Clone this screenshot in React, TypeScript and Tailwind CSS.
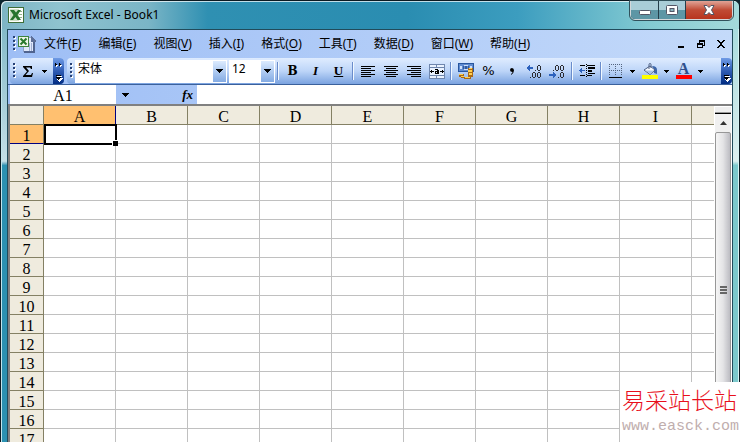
import type { ReactNode } from 'react';
import clsx from 'clsx';

const menus = [
  ['文件', 'F'],
  ['编辑', 'E'],
  ['视图', 'V'],
  ['插入', 'I'],
  ['格式', 'O'],
  ['工具', 'T'],
  ['数据', 'D'],
  ['窗口', 'W'],
  ['帮助', 'H'],
];

const columns = ['A', 'B', 'C', 'D', 'E', 'F', 'G', 'H', 'I'];
const rows = Array.from({ length: 17 }, (_, i) => i + 1);

function ExcelLogo({ className }: { className?: string }) {
  return (
    <svg viewBox="0 0 16 16" className={className} shapeRendering="crispEdges">
      <rect width="16" height="16" fill="#3f6e38" />
      <rect x="1" y="1" width="14" height="14" fill="#fdfefb" />
      <rect x="2" y="2" width="12" height="12" fill="#cfe0c8" />
      <rect x="11" y="2" width="3" height="12" fill="#fff" />
      <path d="M11 4.500h3M11 7.500h3M11 10.500h3" stroke="#8fb388" />
      <path
        d="M2 3h4l2 2.500L10 3h3L9.500 8l3.500 5H9.500L7.500 10 5 13H2l3.500-5z"
        fill="#27732c"
        shapeRendering="auto"
      />
    </svg>
  );
}

function Grip() {
  return (
    <svg viewBox="0 0 3 16" className="w-[3px] h-4 shrink-0" shapeRendering="crispEdges">
      {[0, 4, 8, 12].map((y) => (
        <g key={y}>
          <rect x="1" y={y + 1} width="2" height="2" fill="#fff" />
          <rect x="0" y={y} width="2" height="2" fill="#274176" />
        </g>
      ))}
    </svg>
  );
}

function Arrow() {
  return (
    <svg viewBox="0 0 5 3" className="w-[5px] h-[3px]" shapeRendering="crispEdges">
      <path d="M0 0h5v1H4v1H3v1H2V2H1V1H0z" fill="#000" />
    </svg>
  );
}

function WideArrow() {
  return (
    <svg viewBox="0 0 7 4" className="h-1 w-[7px]" shapeRendering="crispEdges">
      <path d="M0 0h7v1H6v1H5v1H4v1H3V3H2V2H1V1H0z" />
    </svg>
  );
}

function Separator() {
  return (
    <span className="flex w-1.5 shrink-0 justify-center">
      <span className="h-[18px] w-px bg-[#6a8ccb]" />
      <span className="h-[18px] w-px bg-[#f1f9ff]" />
    </span>
  );
}

function ToolButton({ label, children }: { label: string; children: ReactNode }) {
  return (
    <button aria-label={label} className="flex h-[22px] w-[23px] shrink-0 items-center justify-center">
      {children}
    </button>
  );
}

function DropButton({ label }: { label: string }) {
  return (
    <button aria-label={label} className="flex h-[22px] w-[11px] shrink-0 items-center justify-center">
      <Arrow />
    </button>
  );
}

function Overflow({ label }: { label: string }) {
  return (
    <button
      aria-label={label}
      className="flex h-full w-[11px] shrink-0 justify-center rounded-r-sm bg-linear-to-b from-[#6f9be6] via-[#2f5cb4] to-[#022c83]"
    >
      <svg viewBox="0 0 9 27" className="h-[27px] w-[9px]" shapeRendering="crispEdges">
        <path d="M2 6h1v1h1v1H3v1H2zM6 6h1v1h1v1H7v1H6z" fill="#fff" />
        <path d="M1 5h1v1h1v1H2v1H1zM5 5h1v1h1v1H6v1H5z" fill="#000" />
        <path d="M3 20h6v1H8v1H7v1H6v1H5v-1H4v-1H3zM3 18h5v1H3z" fill="#fff" />
        <path d="M2 17h5v1H2zM2 19h5v1H6v1H5v1H4v-1H3v-1H2z" fill="#000" />
      </svg>
    </button>
  );
}

function Lines({ label, spans }: { label: string; spans: [number, number][] }) {
  return (
    <ToolButton label={label}>
      <svg viewBox="0 0 16 13" className="h-[13px] w-4" shapeRendering="crispEdges">
        {spans.map(([x, width], i) => (
          <rect key={i} x={x} y={i * 2 + 1} width={width} height="1" fill="#000" />
        ))}
      </svg>
    </ToolButton>
  );
}

function Combo({ label, value, className }: { label: string; value: string; className: string }) {
  return (
    <div className={clsx('relative h-[23px] shrink-0 bg-white', className)}>
      <select
        aria-label={label}
        defaultValue={value}
        className="block h-[18px] w-full appearance-none bg-transparent pl-[3px] font-['Noto_Sans','Noto_Sans_CJK_SC',sans-serif] text-xs outline-none"
      >
        <option>{value}</option>
      </select>
      <span className="pointer-events-none absolute inset-y-px right-px flex w-[13px] items-center justify-center bg-linear-to-b from-[#dcebfe] to-[#84abe3]">
        <WideArrow />
      </span>
    </div>
  );
}

function Decimals({ label, increase }: { label: string; increase?: boolean }) {
  const single = increase ? 1 : 8;
  const double = increase ? 8 : 1;
  return (
    <ToolButton label={label}>
      <svg viewBox="0 0 17 15" className="h-[15px] w-[17px]" shapeRendering="crispEdges">
        <g fill="#2b2b30">
          {[
            [11, single],
            [6, double],
            [11, double],
          ].map(([x, y]) => (
            <path
              key={`${x}-${y}`}
              transform={`translate(${x} ${y})`}
              d="M1 0h2v1H1zM0 1h1v4H0zM3 1h1v4H3zM1 5h2v1H1z"
            />
          ))}
          <rect x="9" y={single + 5} width="1" height="1" />
          <rect x="4" y={double + 5} width="1" height="1" />
        </g>
        {increase ? (
          <path d="M0 4h1V3h1V2h1V1h1v2h3v2H4v2H3V6H2V5H1z" fill="#2d62bd" />
        ) : (
          <path d="M0 10h4V8h1v1h1v1h1v2H6v1H5v1H4v-2H0z" fill="#2d62bd" />
        )}
      </svg>
    </ToolButton>
  );
}

function TitleBar() {
  return (
    <header className="flex h-7 items-start justify-between pl-[7px] pr-1.5">
      <div className="flex h-7 items-center">
        <ExcelLogo className="size-4" />
        <h1 className="ml-[5px] font-['Noto_Sans',sans-serif] text-xs text-black">Microsoft Excel - Book1</h1>
      </div>
      <div className="flex h-[19px] rounded-b-[5px] border border-t-0 border-white/80 bg-[#243e4a] outline outline-[#31515b]">
        <button
          aria-label="Minimize"
          className="flex w-[27px] items-center justify-center rounded-bl bg-linear-to-b from-[#a9cdd7] from-50% to-[#5d96a5] to-50%"
        >
          <svg viewBox="0 0 12 5" className="mt-1 h-[5px] w-3">
            <rect x=".5" y=".5" width="11" height="4" rx="1" fill="#fff" stroke="#535666" />
          </svg>
        </button>
        <button
          aria-label="Maximize"
          className="ml-px flex w-[26px] items-center justify-center bg-linear-to-b from-[#a9cdd7] from-50% to-[#5d96a5] to-50%"
        >
          <svg viewBox="0 0 12 10" className="h-2.5 w-3">
            <rect x=".5" y=".5" width="11" height="9" rx="1" fill="#fff" stroke="#535666" />
            <rect x="4" y="3.500" width="4" height="3" fill="#8cb9c3" stroke="#535666" />
          </svg>
        </button>
        <button
          aria-label="Close"
          className="ml-px flex w-[46px] items-center justify-center rounded-br bg-linear-to-b from-[#e0a397] via-[#c04b35] via-50% to-[#b8341d]"
        >
          <svg viewBox="0 0 12 10" className="h-2.5 w-3">
            <path d="M1 .5h3l2 2 2-2h3L8.500 5l2.500 4.500H8l-2-2-2 2H1L3.500 5z" fill="#fff" stroke="#535666" />
          </svg>
        </button>
      </div>
    </header>
  );
}

function MenuBar() {
  return (
    <div className="flex h-7 items-center justify-between pl-[5px] pr-[7px]">
      <div className="flex items-center">
        <Grip />
        <svg viewBox="0 0 18 18" className="ml-0.5 h-[18px] w-[18px]" shapeRendering="crispEdges">
          <path d="M5 2h8l4 4v11H5z" fill="#dfe8fa" />
          <path d="M5 12v4h11M5 2h8" fill="none" stroke="#8ea0c8" />
          <path d="M13 1h1v1h1v1h1v1h1v1h1v2h-5z" fill="#5d6f98" />
          <path d="M11.500 8v8M13.500 8v8" stroke="#a0afd3" />
          <path d="M16 7v10H6" fill="none" stroke="#50648f" strokeWidth="2" />
          <rect x="0" y="1" width="11" height="11" fill="#3f8440" />
          <rect x="1" y="2" width="9" height="9" fill="#eef6e9" />
          <path d="M2.500 3.500l6 6M8.500 3.500l-6 6" stroke="#2a7a2d" strokeWidth="2" shapeRendering="auto" />
        </svg>
        <nav className="ml-2 flex gap-[17px] font-['Noto_Sans','Noto_Sans_CJK_SC',sans-serif] text-xs">
          {menus.map(([name, key]) => (
            <button key={key} className="whitespace-nowrap">
              {name}(<span className="underline underline-offset-2">{key}</span>)
            </button>
          ))}
        </nav>
      </div>
      <div className="flex gap-3">
        <button aria-label="Minimize workbook">
          <svg viewBox="0 0 8 8" className="size-2" shapeRendering="crispEdges">
            <path d="M1 6h6v2H1z" />
          </svg>
        </button>
        <button aria-label="Restore workbook">
          <svg viewBox="0 0 8 8" className="size-2" shapeRendering="crispEdges">
            <path d="M2 0h6v6H6V5h1V2H3v1H2zM0 3h6v5H0zM1 5v2h4V5z" fillRule="evenodd" />
          </svg>
        </button>
        <button aria-label="Close workbook">
          <svg viewBox="0 0 8 8" className="size-2" shapeRendering="crispEdges">
            <path d="M0 0h2v1h1v1h2V1h1V0h2v1H7v1H6v1H5v2h1v1h1v1h1v1H6V7H5V6H3v1H2v1H0V7h1V6h1V5h1V3H2V2H1V1H0z" />
          </svg>
        </button>
      </div>
    </div>
  );
}

function Toolbars() {
  return (
    <div className="flex h-[27px] shrink-0 gap-[3px] border-b border-[#3b619c] pl-0.5">
      <div className="flex w-[54px] shrink-0 rounded bg-linear-to-b from-[#dfecff] via-[#bdd5f8] to-[#7ba3e0]">
        <div className="flex flex-1 items-center pl-[3px]">
          <Grip />
          <button aria-label="AutoSum" className="flex h-[22px] w-[23px] items-center justify-center">
            <svg viewBox="0 0 10 11" className="h-[11px] w-2.5">
              <path d="M0 0h9v3H8L7 1.500H3L6 5 2.500 9H8l1-2h1l-1 4H0v-1l4-4.500L0 1z" />
            </svg>
          </button>
          <DropButton label="AutoSum options" />
        </div>
        <Overflow label="Standard toolbar options" />
      </div>

      <div className="flex min-w-0 flex-1 rounded bg-linear-to-b from-[#dfecff] via-[#bdd5f8] to-[#7ba3e0]">
        <div className="flex min-w-0 flex-1 items-center overflow-hidden pl-[3px]">
          <Grip />
          <Combo label="Font" value="宋体" className="ml-0.5 w-[152px]" />
          <Combo label="Font size" value="12" className="ml-0.5 w-[46px]" />
          <Separator />
          <ToolButton label="Bold">
            <b className="font-['DejaVu_Serif',serif] text-xs">B</b>
          </ToolButton>
          <ToolButton label="Italic">
            <i className="font-['Liberation_Serif',serif] text-[13px] font-bold">I</i>
          </ToolButton>
          <ToolButton label="Underline">
            <u className="font-['Liberation_Serif',serif] text-[13px] font-bold">U</u>
          </ToolButton>
          <Separator />
          <Lines label="Align left" spans={[[1, 14], [1, 10], [1, 14], [1, 10], [1, 14], [1, 10]]} />
          <Lines label="Center" spans={[[1, 14], [3, 10], [1, 14], [3, 10], [1, 14], [3, 10]]} />
          <Lines label="Align right" spans={[[1, 14], [5, 10], [1, 14], [5, 10], [1, 14], [5, 10]]} />
          <ToolButton label="Merge and center">
            <svg viewBox="0 0 16 15" className="h-[15px] w-4" shapeRendering="crispEdges">
              <rect width="16" height="15" fill="#6f86ad" />
              <path d="M1 1h6v2H1zM8 1h7v2H8zM1 4h14v7H1zM1 12h6v2H1zM8 12h7v2H8z" fill="#e9f2ff" />
              <path d="M1 7h1V6h1v1h2v1H3v1H2V8H1zM15 7h-1V6h-1v1h-2v1h2v1h1V8h1z" />
              <path d="M6 5h3v1h1v4H6V7h2V6H6zM7 8v1h1V8z" fillRule="evenodd" />
            </svg>
          </ToolButton>
          <Separator />
          <ToolButton label="Currency">
            <svg viewBox="0 0 16 16" className="size-4" shapeRendering="crispEdges">
              <rect width="16" height="9" fill="#28569f" />
              <rect x="1" y="1" width="14" height="7" fill="#5f8bd0" />
              <path d="M2 3h2v3H2zM12 3h2v3h-2zM6 2h4v1H6zM6 6h4v1H6z" fill="#cfe0fa" />
              <path d="M5 3h1v3H5zM10 3h1v3h-1zM7 3h2v3H7z" fill="#31599d" />
              <path d="M10 5h5v9h-2v2H6v-2h4zM1 11h5v4H3v-1H1z" fill="#a96918" />
              <path d="M11 5h3v1h-3zM10 7h4v2h-4zM11 10h3v2h-3zM7 14h5v1H7zM1 11h4v1H1zM3 13h3v1H3z" fill="#ffd04f" />
            </svg>
          </ToolButton>
          <ToolButton label="Percent">
            <span className="font-['DejaVu_Sans',sans-serif] text-[13px]">%</span>
          </ToolButton>
          <ToolButton label="Comma style">
            <svg viewBox="0 0 4 7" className="h-[7px] w-1">
              <path d="M2 0q2 0 2 2.500Q4 5 1 7V6q1.500-1 1.500-2Q0 4 0 2 0 0 2 0" />
            </svg>
          </ToolButton>
          <Decimals label="Increase decimal" increase />
          <Decimals label="Decrease decimal" />
          <Separator />
          <ToolButton label="Decrease indent">
            <svg viewBox="0 0 16 14" className="h-3.5 w-4" shapeRendering="crispEdges">
              <path d="M1 1h5v1H1zM7 0h1v1H7zM7 2h1v1H7zM7 4h1v1H7zM7 6h1v1H7zM7 8h1v1H7zM7 10h1v1H7zM7 12h1v1H7zM8 1h8v1H8zM9 3h7v2H9zM9 6h4v2H9zM9 9h7v1H9zM1 11h5v1H1zM8 11h5v1H8z" />
              <path d="M0 6h1V5h1V4h1v2h3v1H3v2H2V8H1V7H0z" fill="#2d62bd" />
            </svg>
          </ToolButton>
          <Separator />
          <ToolButton label="Borders">
            <svg viewBox="0 0 13 14" className="h-3.5 w-[13px]" shapeRendering="crispEdges">
              <path d="M0 .5h13M0 6.500h13M.5 0v12M6.500 0v12M12.500 0v12" stroke="#53647f" strokeDasharray="1 1" />
              <path d="M0 13h13v1H0z" />
            </svg>
          </ToolButton>
          <DropButton label="Border options" />
          <ToolButton label="Fill color">
            <svg viewBox="0 0 16 16" className="size-4">
              <path d="M10 3q5 0 5 4v4l-3-1V6z" fill="#3c66ab" />
              <path d="M2 7l6-4 5 4-5 4.500z" fill="#f4f8fe" stroke="#4c5f82" />
              <path d="M3.500 7.500h8.500L8 11z" fill="#a9c3e8" />
              <path d="M7 6V1.500Q7 .5 8 .5t1 1V5" fill="none" stroke="#4c5f82" />
              <path d="M0 12h16v4H0z" fill="#ff0" />
            </svg>
          </ToolButton>
          <DropButton label="Fill color options" />
          <ToolButton label="Font color">
            <span className="flex w-4 flex-col items-center border-b-4 border-[#f00] font-['Liberation_Serif',serif] text-base leading-3 font-bold text-[#30508c]">
              A
            </span>
          </ToolButton>
          <DropButton label="Font color options" />
        </div>
        <Overflow label="Formatting toolbar options" />
      </div>
    </div>
  );
}

function FormulaBar() {
  return (
    <div className="flex h-[19px] shrink-0 pl-0.5">
      <input
        aria-label="Name box"
        defaultValue="A1"
        className="h-[19px] w-[106px] shrink-0 bg-white pt-0.5 text-center font-['Liberation_Serif',serif] text-base leading-4 outline-none"
      />
      <button aria-label="Name list" className="flex w-[19px] shrink-0 items-center justify-center">
        <WideArrow />
      </button>
      <button
        aria-label="Insert function"
        className="w-[62px] shrink-0 pr-1 text-right font-['Liberation_Serif',serif] text-[13px] leading-[18px] font-bold italic"
      >
        fx
      </button>
      <input aria-label="Formula" className="h-[19px] min-w-0 flex-1 bg-white outline-none" />
    </div>
  );
}

function Sheet() {
  return (
    <table className="w-full table-fixed border-separate border-spacing-0 font-['Liberation_Serif',serif] text-base">
      <colgroup>
        <col className="w-[34px]" />
        {columns.map((c) => (
          <col key={c} className="w-[72px]" />
        ))}
        <col />
      </colgroup>
      <thead>
        <tr className="h-[19px]">
          <td className="border-r border-b border-[#848064] bg-[#efebde] p-0" />
          {columns.map((c) => (
            <th
              key={c}
              className={clsx(
                'border-r border-b p-0 pt-1 leading-[14px] font-normal',
                c === 'A' ? 'border-[#000080] bg-[#ffc070]' : 'border-[#848064] bg-[#efebde]',
              )}
            >
              {c}
            </th>
          ))}
          <td className="border-b border-[#848064] bg-[#efebde] p-0" />
        </tr>
      </thead>
      <tbody>
        {rows.map((r) => (
          <tr key={r} className="h-[19px]">
            <th
              className={clsx(
                'border-r border-b p-0 pt-1 leading-[14px] font-normal',
                r === 1 ? 'border-r-[#848064] border-b-[#000080] bg-[#ffc070]' : 'border-[#848064] bg-[#efebde]',
              )}
            >
              {r}
            </th>
            {columns.map((c) => {
              const selected = r === 1 && c === 'A';
              return (
                <td key={c} className={clsx('border-r border-b border-[#c0c0c0] p-0', selected && 'relative z-10')}>
                  {selected && (
                    <span className="absolute -top-px -right-0.5 -bottom-0.5 left-0 border-2 border-black">
                      <span className="absolute -right-[3px] -bottom-[3px] size-1.5 border-t border-l border-white bg-black" />
                    </span>
                  )}
                </td>
              );
            })}
            <td className="border-b border-[#c0c0c0] p-0" />
          </tr>
        ))}
      </tbody>
    </table>
  );
}

function ScrollBar() {
  return (
    <div className="flex w-[18px] shrink-0 flex-col overflow-hidden border-x border-white bg-[#f0f0f0]">
      <div className="h-2 shrink-0 border-b border-black bg-[#efefef] shadow-[inset_0_1px_#fff,inset_0_-1px_#999]" />
      <button aria-label="Scroll up" className="flex h-[18px] shrink-0 items-center justify-center">
        <svg viewBox="0 0 7 4" className="h-1 w-[7px]">
          <path d="M3.500 0L7 4H0z" fill="#333" />
        </svg>
      </button>
      <button
        aria-label="Scroll position"
        className="flex h-[316px] shrink-0 items-center justify-center rounded-xs border border-[#979797] bg-linear-to-r from-[#f5f5f5] via-[#e4e4e6] to-[#bcbcc2]"
      >
        <span className="flex flex-col gap-px">
          <span className="h-0.5 w-[7px] bg-[#666]" />
          <span className="h-0.5 w-[7px] bg-[#666]" />
          <span className="h-0.5 w-[7px] bg-[#666]" />
        </span>
      </button>
    </div>
  );
}

export default function App() {
  return (
    <div className="relative h-screen overflow-hidden bg-[#0c2630] text-black">
      <div className="flex h-full flex-col rounded-t-md border border-b-0 border-[#0b1a22] bg-[linear-gradient(90deg,#7db4c4_0%,#8fc3cf_8%,#7ab5c6_20%,#2f90b2_28%,#2a8db1_55%,#3c9dbf_70%,#84cbd2_88%,#a5dadb_100%)] shadow-[inset_1px_1px_rgba(255,255,255,0.7)]">
        <TitleBar />
        <div className="flex min-h-0 flex-1">
          <div className="w-1.5 shrink-0 border-l border-[#c2e5ec] bg-linear-to-b from-[#84bac8] from-0% via-[#c4dfe7] via-32% to-[#2b91b1] to-33%" />
          <main className="flex min-w-0 flex-1 flex-col border border-b-0 border-[#214b5b] bg-linear-to-r from-[#9ebef5] to-[#c4dafa]">
            <MenuBar />
            <Toolbars />
            <FormulaBar />
            <div className="flex min-h-0 flex-1 border-t-2 border-l-2 border-[#808080] bg-white">
              <div className="min-w-0 flex-1 overflow-hidden">
                <Sheet />
              </div>
              <ScrollBar />
            </div>
          </main>
          <div className="w-1.5 shrink-0 border-r border-[#d6f3f3] bg-linear-to-b from-[#a9dcdf] from-0% via-[#dcefef] via-32% to-[#7cc9cc] to-33%" />
        </div>
      </div>

      <div className="absolute right-0 bottom-0 h-[60px] w-[120px] bg-white pl-0.5 whitespace-nowrap">
        <p className="font-['Noto_Sans_CJK_SC',sans-serif] text-[23px] leading-[34px] font-light text-[#e8101c]">
          易采站长站
        </p>
        <p className="mt-0.5 font-['Liberation_Mono',monospace] text-[15px] leading-[18px] text-[#bfaeae]">
          www.easck.com
        </p>
      </div>
    </div>
  );
}
